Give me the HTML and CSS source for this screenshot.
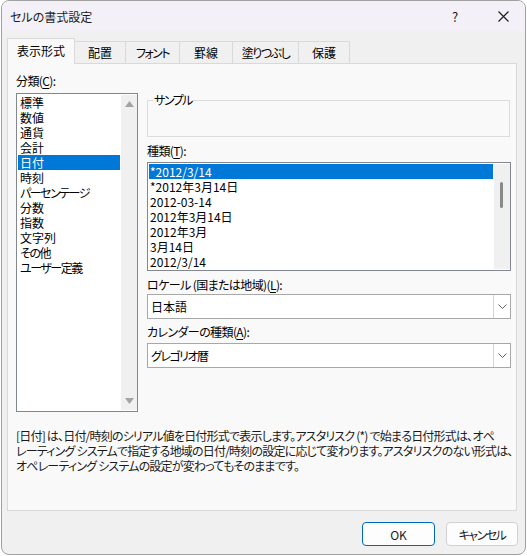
FILE: index.html
```html
<!DOCTYPE html>
<html lang="ja">
  <head>
    <meta charset="UTF-8" />
    <meta name="viewport" content="width=device-width, initial-scale=1.0" />
    <title>セルの書式設定</title>
    <link rel="stylesheet" href="styles.css">
  </head>
  <body>
    <div class="window">
      <div class="titlebar">
        <span class="title">セルの書式設定</span>
        <span class="help">?</span>
        <span class="close">
          <svg width="11" height="11" viewBox="0 0 11 11">
            <path d="M0.5 0.5 L10.5 10.5 M10.5 0.5 L0.5 10.5" stroke="#1a1a1a" stroke-width="1.1" fill="none" />
          </svg>
        </span>
      </div>
      <div class="body">
        <div class="tabs">
          <div class="tab active" style="width: 68px">表示形式</div>
          <div class="tab" style="width: 52px">配置</div>
          <div class="tab kana" style="width: 55px">フォント</div>
          <div class="tab" style="width: 54px">罫線</div>
          <div class="tab kana" style="width: 67px">塗りつぶし</div>
          <div class="tab" style="width: 52px">保護</div>
        </div>
        <div class="panel">
          <div class="panel-main">
            <div class="col-left">
              <div class="label">分類(<u>C</u>):</div>
              <div class="listbox category">
                <ul class="items">
                  <li>標準</li>
                  <li>数値</li>
                  <li>通貨</li>
                  <li>会計</li>
                  <li class="selected">日付</li>
                  <li>時刻</li>
                  <li class="kana">パーセンテージ</li>
                  <li>分数</li>
                  <li>指数</li>
                  <li>文字列</li>
                  <li class="kana">その他</li>
                  <li class="kana">ユーザー定義</li>
                </ul>
                <div class="vscroll arrows">
                  <svg width="9" height="6" viewBox="0 0 9 6"><path d="M4.5 0 L9 6 L0 6 Z" fill="#a3a3a3" /></svg>
                  <svg width="9" height="6" viewBox="0 0 9 6"><path d="M0 0 L9 0 L4.5 6 Z" fill="#a3a3a3" /></svg>
                </div>
              </div>
            </div>
            <div class="col-right">
              <div class="sample"><span class="sample-label kana">サンプル</span></div>
              <div class="label gap-top">種類(<u>T</u>):</div>
              <div class="listbox types">
                <ul class="items">
                  <li class="selected">*2012/3/14</li>
                  <li>*2012年3月14日</li>
                  <li>2012-03-14</li>
                  <li>2012年3月14日</li>
                  <li>2012年3月</li>
                  <li>3月14日</li>
                  <li>2012/3/14</li>
                </ul>
                <div class="vscroll">
                  <div class="thumb"></div>
                </div>
              </div>
              <div class="label locale-label">ロケール (国または地域)(<u>L</u>):</div>
              <div class="combo">
                <span class="combo-value">日本語</span>
                <span class="combo-btn">
                  <svg width="9" height="5" viewBox="0 0 9 5"><path d="M0.5 0.5 L4.5 4.5 L8.5 0.5" stroke="#606060" fill="none" /></svg>
                </span>
              </div>
              <div class="label calendar-label">カレンダーの種類(<u>A</u>):</div>
              <div class="combo calendar">
                <span class="combo-value kana">グレゴリオ暦</span>
                <span class="combo-btn">
                  <svg width="9" height="5" viewBox="0 0 9 5"><path d="M0.5 0.5 L4.5 4.5 L8.5 0.5" stroke="#606060" fill="none" /></svg>
                </span>
              </div>
            </div>
          </div>
          <p class="desc">[日付] は、日付/時刻のシリアル値を日付形式で表示します。アスタリスク (*) で始まる日付形式は、オペ<br>レーティング システムで指定する地域の日付/時刻の設定に応じて変わります。アスタリスクのない形式は、<br>オペレーティング システムの設定が変わってもそのままです。</p>
        </div>
        <div class="buttons">
          <button class="btn primary">OK</button>
          <button class="btn kana">キャンセル</button>
        </div>
      </div>
    </div>
  </body>
</html>
```

FILE: styles.css
```css
* {
  box-sizing: border-box;
}
body {
  margin: 0;
  background-color: #ffffff;
  font-family: "Noto Sans CJK JP", "Noto Sans", sans-serif;
  font-size: 12px;
  font-feature-settings: "palt" 1;
  color: #000;
}
.kana {
  letter-spacing: -1.5px;
}
.window {
  margin-left: 1px;
  width: 525px;
  height: 555px;
  border: 1px solid #a0a0a0;
  border-radius: 8px;
  overflow: hidden;
  background-color: #f0f0f0;
  display: flex;
  flex-direction: column;
}
.titlebar {
  height: 30px;
  flex-shrink: 0;
  background-color: #f3f0f7;
  display: flex;
  align-items: center;
  padding-left: 8px;
  color: #1a1a1a;
}
.title {
  flex: 1;
  line-height: 15px;
}
.help {
  width: 10px;
  margin-right: 36px;
  font-size: 13px;
  line-height: 15px;
}
.close {
  display: flex;
  margin-right: 16px;
}
.body {
  flex: 1;
  padding: 7px 0 0 5px;
}
.tabs {
  display: flex;
  align-items: flex-end;
  height: 25px;
}
.tab {
  height: 22px;
  margin-right: -1px;
  border: 1px solid #d9d9d9;
  border-bottom: none;
  background-color: #f0f0f0;
  display: flex;
  align-items: center;
  justify-content: center;
  line-height: 15px;
}
.tab.active {
  height: 26px;
  margin-bottom: -1px;
  background-color: #f9f9f9;
  position: relative;
  z-index: 1;
  padding-bottom: 2px;
}
.panel {
  width: 510px;
  height: 448px;
  border: 1px solid #d9d9d9;
  background-color: #f9f9f9;
  padding: 9px 0 0 8px;
}
.panel-main {
  display: flex;
  gap: 9px;
}
.col-left {
  width: 122px;
}
.col-right {
  width: 364px;
}
.label {
  line-height: 15px;
  margin-bottom: 5px;
  letter-spacing: -0.6px;
}
.label u {
  text-underline-offset: 2px;
}
.listbox {
  display: flex;
  background-color: #fff;
  border: 1px solid #828790;
}
.listbox.category {
  height: 319px;
}
.items {
  list-style: none;
  margin: 0;
  padding: 1px;
  flex: 1;
}
.items li {
  height: 15px;
  line-height: 15px;
  padding-left: 2px;
  white-space: nowrap;
}
.items li.selected {
  background-color: #0078d7;
  color: #fff;
}
.vscroll {
  width: 16px;
  background-color: #f0f0f0;
  border-top: 1px solid #fff;
  border-bottom: 1px solid #fff;
}
.vscroll.arrows {
  display: flex;
  flex-direction: column;
  align-items: center;
  justify-content: space-between;
  padding: 6px 0 6px;
}
.thumb {
  width: 3px;
  height: 26px;
  margin: 18px 0 0 6px;
  border-radius: 2px;
  background-color: #8a8a8a;
}
.sample {
  margin-top: 27px;
  width: 363px;
  height: 37px;
  border: 1px solid #dcdcdc;
  position: relative;
}
.sample-label {
  position: absolute;
  top: -9px;
  left: 5px;
  padding: 0 1px;
  line-height: 15px;
  background-color: #f9f9f9;
}
.gap-top {
  margin-top: 6px;
  margin-bottom: 4px;
}
.listbox.types {
  height: 109px;
}
.listbox.types .items li {
  padding-left: 1px;
}
.locale-label {
  margin-top: 6px;
  margin-bottom: 2px;
}
.calendar-label {
  margin-top: 5px;
  margin-bottom: 4px;
}
.combo {
  height: 25px;
  display: flex;
  background-color: #fff;
  border: 1px solid #a8a8a8;
}
.combo-value {
  flex: 1;
  line-height: 23px;
  padding-left: 3px;
}
.combo-btn {
  width: 17px;
  border-left: 1px solid #d4d4d4;
  display: flex;
  align-items: center;
  justify-content: center;
}
.desc {
  margin: 16px 0 0;
  line-height: 15px;
  white-space: nowrap;
  letter-spacing: -0.8px;
  color: #1a1a1a;
}
.buttons {
  display: flex;
  justify-content: flex-end;
  gap: 11px;
  margin-top: 11px;
  padding-right: 7px;
}
.btn {
  height: 24px;
  width: 72px;
  font-family: inherit;
  font-size: 12px;
  font-feature-settings: "palt" 1;
  background-color: #fdfdfd;
  border: 1px solid #d0d0d0;
  border-radius: 4px;
  color: #1a1a1a;
  padding: 0;
}
.btn.primary {
  width: 73px;
  border: 1px solid #0067c0;
}
```
